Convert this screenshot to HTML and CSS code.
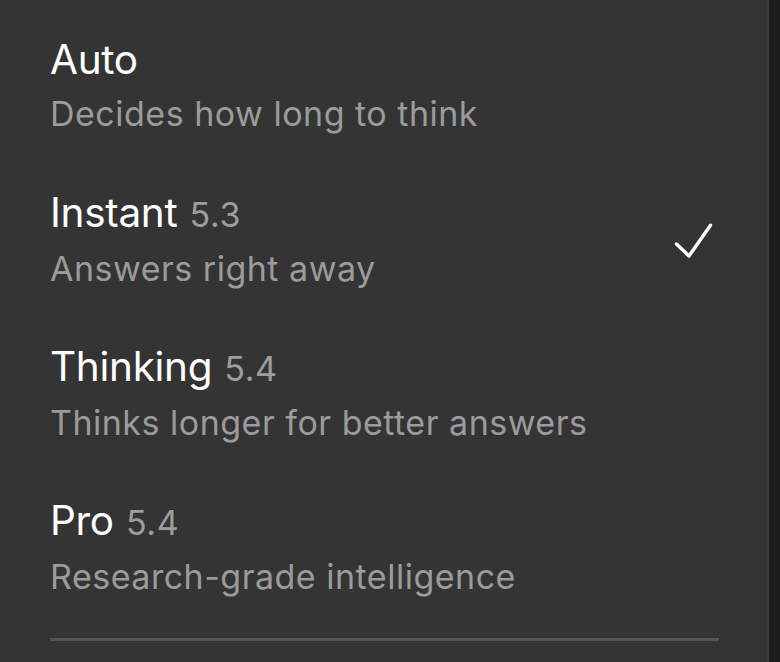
FILE: index.html
```html
<!DOCTYPE html>
<html lang="en">
<head>
<meta charset="utf-8">
<link rel="stylesheet" href="styles.css">
<title>Model picker</title>
</head>
<body>
<div class="panel">
  <ul class="options">
    <li class="option">
      <div class="text">
        <div class="title">Auto</div>
        <div class="desc">Decides how long to think</div>
      </div>
    </li>
    <li class="option">
      <div class="text">
        <div class="title">Instant <span class="ver">5.3</span></div>
        <div class="desc">Answers right away</div>
      </div>
      <svg class="check" width="40" height="36" viewBox="0 0 40 36" aria-hidden="true">
        <path d="M3.5 22 L16 34 L37.5 3.2" fill="none" stroke="#ffffff" stroke-width="3.4" stroke-linecap="round" stroke-linejoin="round"/>
      </svg>
    </li>
    <li class="option">
      <div class="text">
        <div class="title">Thinking <span class="ver">5.4</span></div>
        <div class="desc">Thinks longer for better answers</div>
      </div>
    </li>
    <li class="option">
      <div class="text">
        <div class="title">Pro <span class="ver">5.4</span></div>
        <div class="desc">Research-grade intelligence</div>
      </div>
    </li>
  </ul>
  <div class="divider"></div>
</div>
</body>
</html>
```
FILE: styles.css
```css
html, body {
  margin: 0;
  padding: 0;
  height: 100%;
}
body {
  background: #1d1d1d;
  font-family: Inter, "Noto Sans", "Liberation Sans", sans-serif;
  overflow: hidden;
}
.panel {
  box-sizing: border-box;
  width: 769px;
  height: 662px;
  background: #343434;
  border-right: 2px solid #3b3b3b;
  padding: 33px 48px 0 50px;
  display: flex;
  flex-direction: column;
}
.options {
  list-style: none;
  margin: 0;
  padding: 0;
  display: flex;
  flex-direction: column;
  gap: 44px;
}
.option {
  display: flex;
  align-items: center;
  justify-content: space-between;
  height: 110px;
}
.title {
  color: #ffffff;
  font-size: 40.5px;
  line-height: 50px;
  padding-top: 2px;
  letter-spacing: -0.3px;
  white-space: nowrap;
}
.ver {
  color: #9d9d9d;
  font-size: 34px;
  letter-spacing: 0.6px;
  margin-left: 1px;
}
.desc {
  color: #9b9b9b;
  font-size: 34px;
  line-height: 58px;
  letter-spacing: 0.5px;
  white-space: nowrap;
}
.check {
  margin-right: 6px;
  margin-top: -4px;
}
.divider {
  margin-top: 33px;
  height: 3px;
  background: #545454;
}
```
